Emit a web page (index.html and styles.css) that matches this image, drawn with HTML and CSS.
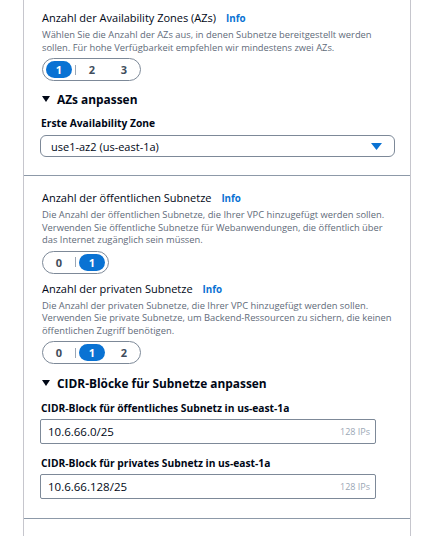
FILE: index.html
```html
<!DOCTYPE html>
<html lang="de">
<head>
<meta charset="utf-8">
<link rel="stylesheet" href="styles.css">
</head>
<body>
<div class="panel">
  <section class="sec sec-first">
    <div class="field-label">Anzahl der Availability Zones (AZs) <a class="info">Info</a></div>
    <p class="desc">Wählen Sie die Anzahl der AZs aus, in denen Subnetze bereitgestellt werden sollen. Für hohe Verfügbarkeit empfehlen wir mindestens zwei AZs.</p>
    <div class="seg">
      <span class="opt sel"><span class="pill">1</span></span>
      <span class="sep"></span>
      <span class="opt">2</span>
      <span class="opt">3</span>
    </div>
    <div class="expander"><span class="caret"></span>AZs anpassen</div>
    <div class="sub-label">Erste Availability Zone</div>
    <div class="select">
      <span>use1-az2 (us-east-1a)</span>
      <svg class="sel-arrow" width="11" height="7" viewBox="0 0 11 7"><path d="M0 0h11L5.5 7z" fill="#0972d3"/></svg>
    </div>
  </section>
  <section class="sec sec-second">
    <div class="field-label">Anzahl der öffentlichen Subnetze <a class="info">Info</a></div>
    <p class="desc">Die Anzahl der öffentlichen Subnetze, die Ihrer VPC hinzugefügt werden sollen. Verwenden Sie öffentliche Subnetze für Webanwendungen, die öffentlich über das Internet zugänglich sein müssen.</p>
    <div class="seg">
      <span class="opt">0</span>
      <span class="sep"></span>
      <span class="opt sel"><span class="pill">1</span></span>
    </div>
    <div class="field-label gap-top">Anzahl der privaten Subnetze <a class="info">Info</a></div>
    <p class="desc">Die Anzahl der privaten Subnetze, die Ihrer VPC hinzugefügt werden sollen. Verwenden Sie private Subnetze, um Backend-Ressourcen zu sichern, die keinen öffentlichen Zugriff benötigen.</p>
    <div class="seg">
      <span class="opt">0</span>
      <span class="sep"></span>
      <span class="opt sel"><span class="pill">1</span></span>
      <span class="opt">2</span>
    </div>
    <div class="expander expander-cidr"><span class="caret"></span>CIDR-Blöcke für Subnetze anpassen</div>
    <div class="sub-label">CIDR-Block für öffentliches Subnetz in us-east-1a</div>
    <div class="input"><span>10.6.66.0/25</span><span class="hint">128 IPs</span></div>
    <div class="sub-label gap-big">CIDR-Block für privates Subnetz in us-east-1a</div>
    <div class="input"><span>10.6.66.128/25</span><span class="hint">128 IPs</span></div>
  </section>
  <section class="sec sec-third"></section>
</div>
</body>
</html>
```
FILE: styles.css
```css
html, body {
  margin: 0;
  padding: 0;
  background: #ffffff;
}
body {
  font-family: "Open Sans", "Noto Sans", sans-serif;
  color: #000716;
  width: 432px;
  height: 536px;
  overflow: hidden;
}
.panel {
  margin: 0 21px 0 23px;
  border-left: 1px solid #c6c6cd;
  border-right: 1px solid #c6c6cd;
}
.sec {
  padding: 0 0 0 18px;
  border-bottom: 1px solid #8d99a8;
}
.sec-first {
  padding-top: 10px;
  padding-bottom: 18px;
}
.sec-second {
  padding-top: 14px;
  padding-bottom: 19px;
}
.sec-third {
  border-bottom: none;
  height: 30px;
}
.field-label {
  font-size: 11px;
  line-height: 16px;
  height: 16px;
}
.field-label.gap-top {
  margin-top: 7px;
}
.info {
  color: #0972d3;
  font-weight: 700;
  font-size: 9.8px;
  margin-left: 7px;
}
.desc {
  margin: 3px 0 0;
  font-size: 9.35px;
  line-height: 12.5px;
  color: #5f6b7a;
  width: 354px;
}
.seg {
  margin-top: 4px;
  display: inline-flex;
  align-items: center;
  height: 21px;
  border: 1px solid #7d8998;
  border-radius: 12px;
}
.opt {
  width: 32px;
  display: flex;
  justify-content: center;
  align-items: center;
  font-size: 11px;
  font-weight: 700;
  color: #414d5c;
}
.pill {
  width: 26px;
  height: 17px;
  border-radius: 9px;
  background: #0972d3;
  color: #ffffff;
  display: flex;
  justify-content: center;
  align-items: center;
}
.sep {
  width: 1px;
  height: 10px;
  background: #9ba7b6;
}
.expander {
  margin-top: 9px;
  font-size: 11.9px;
  font-weight: 700;
  line-height: 18px;
  display: flex;
  align-items: center;
}
.expander-cidr {
  margin-top: 10px;
}
.caret {
  width: 0;
  height: 0;
  border-left: 4px solid transparent;
  border-right: 4px solid transparent;
  border-top: 6px solid #000716;
  margin-right: 7px;
}
.sub-label {
  margin-top: 8px;
  margin-left: -1px;
  font-size: 10.25px;
  font-weight: 700;
  line-height: 14px;
}
.expander-cidr + .sub-label {
  margin-top: 9px;
}
.sub-label.gap-big {
  margin-top: 12px;
}
.select {
  margin-top: 5px;
  margin-left: -2px;
  height: 20px;
  border: 1px solid #7d8998;
  border-radius: 6px;
  display: flex;
  align-items: center;
  justify-content: space-between;
  padding: 0 12px 0 10px;
  font-size: 11px;
  width: 331px;
}
.input {
  margin-top: 4px;
  margin-left: -2px;
  width: 322px;
  height: 23px;
  border: 1px solid #7d8998;
  border-radius: 2px;
  display: flex;
  align-items: center;
  justify-content: space-between;
  padding: 0 5px 0 7px;
  font-size: 11.5px;
}
.hint {
  font-size: 9px;
  color: #9ba7b6;
}
```
